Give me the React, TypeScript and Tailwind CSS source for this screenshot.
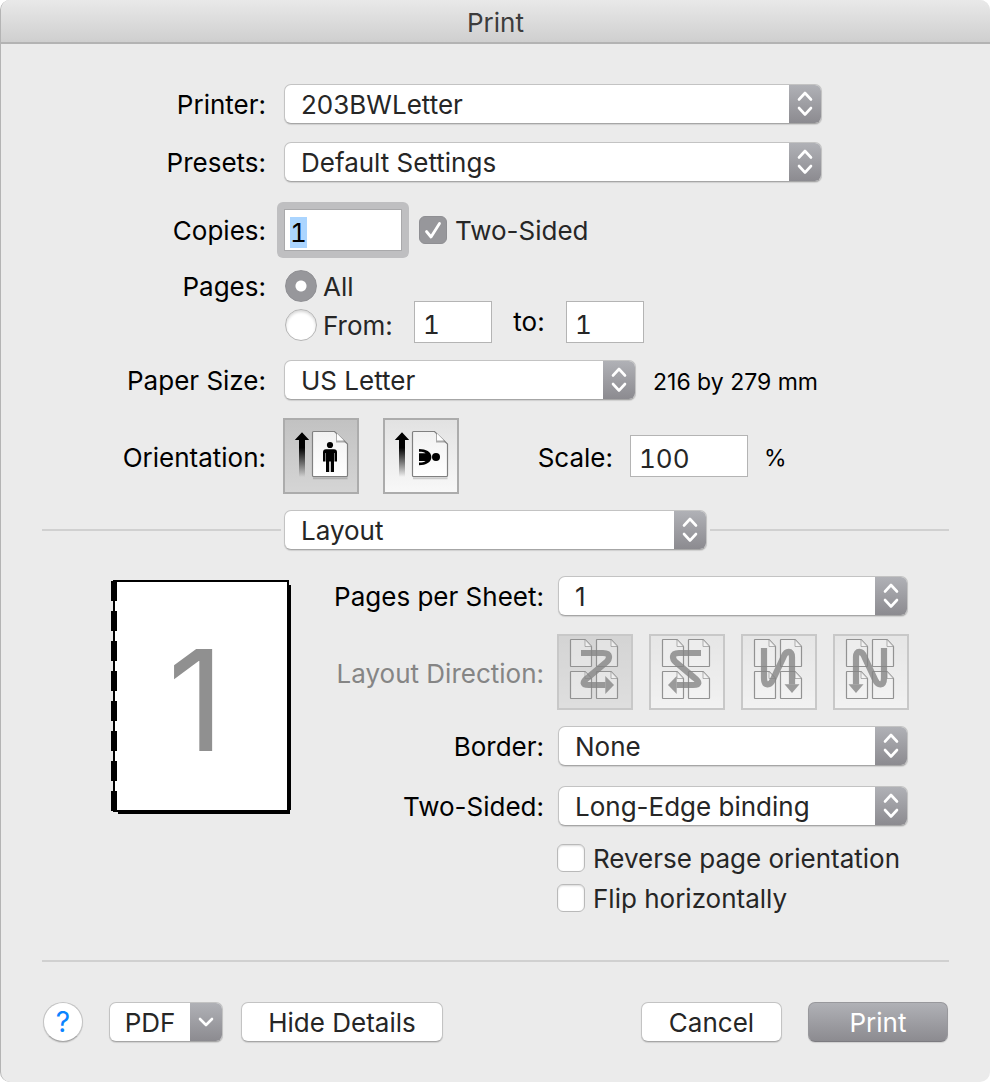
import { useEffect, useRef, useState } from "react";
import type { ReactNode } from "react";

function SelectBox({ id, label, options, className }: { id: string; label?: string; options: string[]; className: string }) {
  return (
    <div className={`mx-px grid h-10 overflow-hidden rounded-[7px] border border-[#c3c3c3] border-b-[#a6a6a6] bg-white shadow-[0_1px_1px_rgba(0,0,0,0.12)] ${className}`}>
      <select
        id={id}
        aria-label={label}
        className="col-start-1 row-start-1 w-full appearance-none bg-transparent pt-0.5 pr-10 pl-4 text-[26px] leading-8 text-[#262626] outline-none"
      >
        {options.map((o) => (
          <option key={o}>{o}</option>
        ))}
      </select>
      <span className="pointer-events-none col-start-1 row-start-1 flex w-8 items-center justify-center justify-self-end bg-linear-to-b from-[#b0b1b6] to-[#8c8b90]">
        <svg width="16" height="26" viewBox="0 0 16 26" fill="none" stroke="#fff" strokeWidth="2.6" strokeLinecap="round" strokeLinejoin="round">
          <path d="M2 8.5 8 2l6 6.5M2 17l6 6.5L14 17" />
        </svg>
      </span>
    </div>
  );
}

function CheckBox({ id, children, defaultChecked = false }: { id: string; children: ReactNode; defaultChecked?: boolean }) {
  return (
    <label htmlFor={id} className="flex items-center gap-2 text-[#262626]">
      <span className="grid size-7">
        <input
          id={id}
          type="checkbox"
          defaultChecked={defaultChecked}
          className="peer col-start-1 row-start-1 size-7 appearance-none rounded-[6px] border border-[#b9b9b9] bg-white shadow-[inset_0_1px_2px_rgba(0,0,0,0.15)] checked:border-[#8f8f93] checked:bg-[#97979b] checked:shadow-none"
        />
        <svg viewBox="0 0 28 28" className="pointer-events-none invisible col-start-1 row-start-1 size-7 peer-checked:visible" fill="none" stroke="#fff" strokeWidth="2.8" strokeLinecap="round" strokeLinejoin="round">
          <path d="M7.5 15.5 12 21 20.5 7.5" />
        </svg>
      </span>
      <span className="pt-0.5">{children}</span>
    </label>
  );
}

function RadioInput({ id, defaultChecked = false }: { id: string; defaultChecked?: boolean }) {
  return (
    <input
      id={id}
      type="radio"
      name="pages"
      defaultChecked={defaultChecked}
      className="size-8 shrink-0 appearance-none rounded-full border border-[#b5b5b5] bg-white shadow-[inset_0_2px_3px_rgba(0,0,0,0.16)] checked:border-[#8f8f93] checked:bg-[radial-gradient(circle,#fff_5px,#97979b_6px)] checked:shadow-none"
    />
  );
}

function TileButton({ label, selected, disabled, onClick, children }: { label: string; selected: boolean; disabled?: boolean; onClick?: () => void; children: ReactNode }) {
  const shade = selected ? "from-[#c2c2c2] to-[#d5d5d5]" : "from-[#e2e2e2] to-[#f8f8f8]";
  return (
    <button
      type="button"
      aria-label={label}
      aria-pressed={selected}
      disabled={disabled}
      onClick={onClick}
      className={`size-19 shrink-0 border-2 border-[#acacac] bg-linear-to-b disabled:opacity-55 ${shade}`}
    >
      <svg viewBox="2 2 72 72" className="block size-18">
        {children}
      </svg>
    </button>
  );
}

function OrientationArt({ landscape }: { landscape: boolean }) {
  const fade = landscape ? "fadeL" : "fadeP";
  const paper = landscape ? "paperL" : "paperP";
  return (
    <>
      <defs>
        <linearGradient id={fade} x1="0" y1="14" x2="0" y2="59" gradientUnits="userSpaceOnUse">
          <stop offset="0.35" stopColor="#000" />
          <stop offset="1" stopColor="#000" stopOpacity="0" />
        </linearGradient>
        <linearGradient id={paper} x1="0" y1="0" x2="0" y2="1">
          <stop offset="0" stopColor="#f1f1f1" />
          <stop offset="1" stopColor="#fff" />
        </linearGradient>
      </defs>
      <path d="M19 14.3 26.2 22H22v37h-6V22h-4.2z" fill={`url(#${fade})`} />
      <path d="M30 60.2h34.5" stroke="#000" strokeOpacity="0.16" strokeWidth="2" />
      <path d="M30.5 13.5H51.5L64.5 26V57.5q0 1-1 1H30.5q-1 0-1-1V14.5q0-1 1-1z" fill={`url(#${paper})`} stroke="#808080" strokeWidth="1.2" />
      <path d="M53 14.5V24.5h10.5z" fill="#8a8a8a" opacity="0.7" />
      <path d="M54 15.5V22.5h7z" fill="#fff" />
      {landscape ? (
        <>
          <path d="M36 31C43 31 48.4 33.8 48.4 39S43 47.2 36 47.2v-2.6c3 0 5.2-.5 6.6-1.6H36V35.2h6.6C41 34.2 39 33.8 36 33.8z" fill="#000" />
          <circle cx="53" cy="39" r="4" fill="#000" />
        </>
      ) : (
        <>
          <circle cx="47" cy="27" r="3.1" fill="#000" />
          <path d="M43 31.3h8c2 0 3 1.2 3 3V43.6h-2.5V35H51V54h-3.2V43.6h-1.6V54H43V35h-.5v8.6H40V34.3c0-1.8 1-3 3-3z" fill="#000" />
        </>
      )}
    </>
  );
}

const HORIZONTAL = {
  line: "M24 19H46C54 19 53 25 49 28.5L31 43.5C25 48 25 51 32 51H48.5",
  head: "M48.3 42 57 51 48.3 60z",
};
const VERTICAL = {
  line: "M23 14V44C23 52.5 29 52 32 45.5L42.5 23C45 16.5 51 16 51 23V50.5",
  head: "M43.5 50.3H58.5L51 59z",
};

function DirectionArt({ shape, mirror }: { shape: { line: string; head: string }; mirror?: string }) {
  const corners = [[13.5, 5.5], [39.5, 5.5], [13.5, 37.5], [39.5, 37.5]];
  return (
    <>
      {corners.map(([x, y]) => (
        <g key={`${x}-${y}`} transform={`translate(${x} ${y})`} stroke="#4a4a4a" strokeWidth="1.2" strokeLinejoin="round">
          <path d="M.5 0H14.5L21 7V26.5q0 .5-.5.5H.5Q0 27 0 26.5V.5Q0 0 .5 0z" fill="#fff" fillOpacity="0.42" />
          <path d="M14.5 0V7H21" fill="#fff" fillOpacity="0.6" strokeWidth="0.7" />
        </g>
      ))}
      <g transform={mirror} opacity="0.8">
        <path d={shape.line} fill="none" stroke="#333" strokeWidth="6.2" />
        <path d={shape.head} fill="#333" />
      </g>
    </>
  );
}

function PagePreview() {
  return (
    <svg viewBox="0 0 180 234" className="block w-[180px]" role="img" aria-label="Page preview">
      <path d="M7 230H180V5h-4z" fill="#000" />
      <path d="M7 230h172v4H7z" fill="#000" />
      <path d="M2 0h176v232H2z" fill="#000" />
      <path d="M4 2h172v228H4z" fill="#fff" />
      <path d="M3 1v232" stroke="#000" strokeWidth="6" strokeDasharray="20 10" />
      <text x="85" y="171" textAnchor="middle" fontSize="140" fill="#909090">
        1
      </text>
    </svg>
  );
}

const row = "grid grid-cols-[226px_1fr] items-center gap-x-[17px]";
const rowLabel = "pt-0.5 text-right";
const field = "border border-[#b4b4b4] bg-white px-2 pt-1 text-[26px] leading-8 tabular-nums text-[#262626] outline-none";
const pushButton = "h-10 rounded-[7px] border border-[#c3c3c3] border-b-[#a6a6a6] bg-white text-[#262626] shadow-[0_1px_1px_rgba(0,0,0,0.12)]";

export default function App() {
  const copies = useRef<HTMLInputElement>(null);
  const [landscape, setLandscape] = useState(false);

  useEffect(() => {
    copies.current?.focus();
    copies.current?.select();
  }, []);

  return (
    <div className="bg-white font-['Inter',sans-serif] text-[26px] leading-[26px] text-black">
      <form
        onSubmit={(e) => e.preventDefault()}
        className="flex min-h-screen flex-col overflow-hidden rounded-[10px] border-l border-[#b4b4b4] bg-[#ebebeb]"
      >
        <header className="flex h-11 items-center justify-center border-b-2 border-[#b3b3b3] bg-linear-to-b from-[#e9e9e9] to-[#cfcfcf]">
          <h1 className="pt-1 text-[#3c3c3c]">Print</h1>
        </header>

        <main className="flex flex-1 flex-col pt-10 pr-10 pl-[39px]">
          <div className={row}>
            <label htmlFor="printer" className={rowLabel}>Printer:</label>
            <SelectBox id="printer" options={["203BWLetter"]} className="max-w-[538px]" />
          </div>
          <div className={`${row} mt-[18px]`}>
            <label htmlFor="presets" className={rowLabel}>Presets:</label>
            <SelectBox id="presets" options={["Default Settings"]} className="max-w-[538px]" />
          </div>
          <div className={`${row} mt-5`}>
            <label htmlFor="copies" className={rowLabel}>Copies:</label>
            <div className="flex items-center gap-[10px]">
              <span className="-ml-1.5 rounded-[6px] bg-[#bfbfc1] p-[7px]">
                <input
                  ref={copies}
                  id="copies"
                  defaultValue="1"
                  className="block h-[42px] w-[118px] border border-[#a9a9ab] bg-white px-[5px] pt-1 text-[26px] leading-8 tabular-nums text-black outline-none selection:bg-[#abd5ff] selection:text-black"
                />
              </span>
              <CheckBox id="duplex" defaultChecked>Two-Sided</CheckBox>
            </div>
          </div>
          <fieldset className="mt-3">
            <div className={row}>
              <span className={rowLabel}>Pages:</span>
              <label htmlFor="all" className="flex items-center gap-1.5 pl-0.5 text-[#262626]">
                <RadioInput id="all" defaultChecked />
                <span className="pt-0.5">All</span>
              </label>
            </div>
            <div className="-mt-px flex items-start pl-[243px]">
              <label htmlFor="range" className="flex w-[131px] items-center gap-1.5 pt-2 pl-0.5 text-[#262626]">
                <RadioInput id="range" />
                <span className="pt-0.5">From:</span>
              </label>
              <input id="from" aria-label="From page" defaultValue="1" className={`h-[42px] w-[78px] ${field}`} />
              <label htmlFor="to" className="w-[74px] pt-2 text-center">to:</label>
              <input id="to" defaultValue="1" className={`h-[42px] w-[78px] ${field}`} />
            </div>
          </fieldset>
          <div className={`${row} mt-[17px]`}>
            <label htmlFor="paper" className={rowLabel}>Paper Size:</label>
            <div className="flex items-center gap-4">
              <SelectBox id="paper" options={["US Letter"]} className="w-[352px]" />
              <span className="pt-1 text-[23px]">216 by 279 mm</span>
            </div>
          </div>
          <div className={`${row} mt-[18px]`}>
            <span className="pt-1 text-right">Orientation:</span>
            <div className="flex items-center">
              <div className="flex gap-6">
                <TileButton label="Portrait" selected={!landscape} onClick={() => setLandscape(false)}>
                  <OrientationArt landscape={false} />
                </TileButton>
                <TileButton label="Landscape" selected={landscape} onClick={() => setLandscape(true)}>
                  <OrientationArt landscape />
                </TileButton>
              </div>
              <label htmlFor="scale" className="w-[154px] pt-1 text-right">Scale:</label>
              <input id="scale" defaultValue="100" className={`mr-4 ml-[17px] h-[42px] w-[118px] ${field}`} />
              <span className="pt-1 text-[23px]">%</span>
            </div>
          </div>

          <div className="mt-4 flex items-center gap-0.5 pr-px pl-0.5">
            <hr className="w-[239px] border-t-2 border-[#d0d0d0]" />
            <SelectBox id="pane" label="Options pane" options={["Layout"]} className="w-[423px]" />
            <hr className="flex-1 border-t-2 border-[#d0d0d0]" />
          </div>

          <section className="mt-[26px] flex items-start">
            <div className="shrink-0 pt-1 pl-[71px]">
              <PagePreview />
            </div>
            <div className="grid flex-1 grid-cols-[253px_1fr] items-center gap-x-[13px]">
              <label htmlFor="perSheet" className={rowLabel}>Pages per Sheet:</label>
              <SelectBox id="perSheet" options={["1"]} className="max-w-[350px]" />

              <span className="mt-[18px] pt-1 text-right text-[#858585]">Layout Direction:</span>
              <div className="mt-[18px] flex gap-4">
                <TileButton label="Across then down, from left" selected disabled>
                  <DirectionArt shape={HORIZONTAL} />
                </TileButton>
                <TileButton label="Across then down, from right" selected={false} disabled>
                  <DirectionArt shape={HORIZONTAL} mirror="translate(76 0) scale(-1 1)" />
                </TileButton>
                <TileButton label="Down then across, from left" selected={false} disabled>
                  <DirectionArt shape={VERTICAL} />
                </TileButton>
                <TileButton label="Down then across, from right" selected={false} disabled>
                  <DirectionArt shape={VERTICAL} mirror="translate(74 0) scale(-1 1)" />
                </TileButton>
              </div>

              <label htmlFor="border" className={`mt-4 ${rowLabel}`}>Border:</label>
              <div className="mt-4">
                <SelectBox id="border" options={["None"]} className="max-w-[350px]" />
              </div>

              <label htmlFor="binding" className={`mt-5 ${rowLabel}`}>Two-Sided:</label>
              <div className="mt-5">
                <SelectBox id="binding" options={["Long-Edge binding"]} className="max-w-[350px]" />
              </div>

              <div className="col-start-2 mt-[18px] flex flex-col gap-3">
                <CheckBox id="reverse">Reverse page orientation</CheckBox>
                <CheckBox id="flip">Flip horizontally</CheckBox>
              </div>
            </div>
          </section>

          <hr className="mt-12 mr-px ml-0.5 border-t-2 border-[#d0d0d0]" />

          <footer className="mt-10 mb-[39px] flex items-center pr-0.5 pl-[3px]">
            <button type="button" aria-label="Help" className="size-10 rounded-full border border-[#c3c3c3] border-b-[#a6a6a6] bg-white text-[28px] leading-8 text-[#0a84ff] shadow-[0_1px_1px_rgba(0,0,0,0.12)]">
              ?
            </button>
            <button type="button" className={`ml-[26px] flex w-[114px] overflow-hidden ${pushButton}`}>
              <span className="flex-1 self-center pt-0.5">PDF</span>
              <span className="flex w-8 items-center justify-center self-stretch bg-linear-to-b from-[#b0b1b6] to-[#8c8b90]">
                <svg width="16" height="10" viewBox="0 0 16 10" fill="none" stroke="#fff" strokeWidth="2.6" strokeLinecap="round" strokeLinejoin="round">
                  <path d="M2 2l6 6 6-6" />
                </svg>
              </span>
            </button>
            <button type="button" className={`ml-[18px] w-[202px] pt-0.5 ${pushButton}`}>Hide Details</button>
            <button type="button" className={`ml-auto w-[141px] pt-0.5 ${pushButton}`}>Cancel</button>
            <button type="submit" className="ml-[26px] h-10 w-[140px] rounded-[7px] border border-[#98989c] border-b-[#7c7b80] bg-linear-to-b from-[#b0b1b6] to-[#8c8b90] pt-0.5 text-white shadow-[0_1px_1px_rgba(0,0,0,0.12)]">
              Print
            </button>
          </footer>
        </main>
      </form>
    </div>
  );
}
